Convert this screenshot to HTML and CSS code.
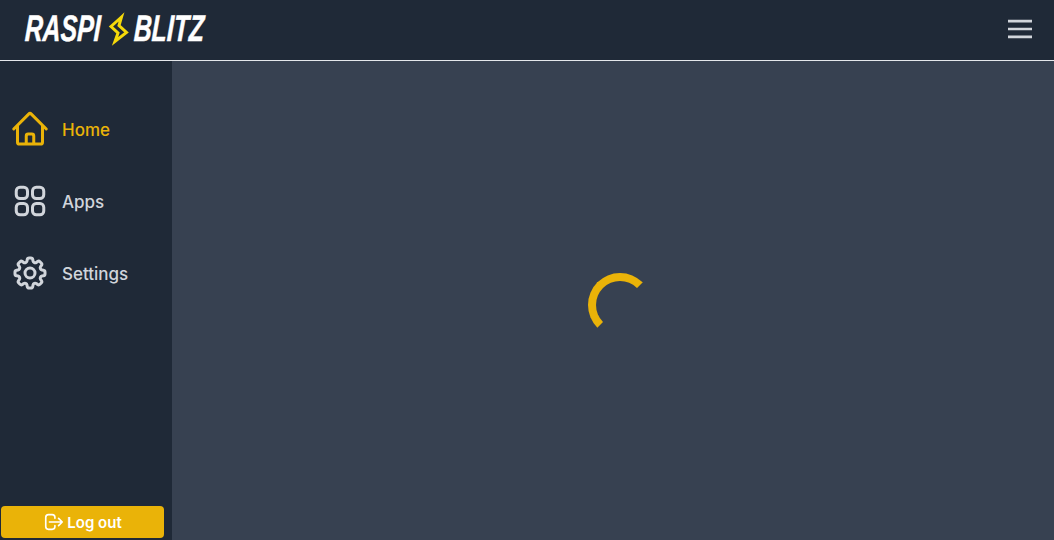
FILE: index.html
```html
<!DOCTYPE html>
<html lang="en">
<head>
<meta charset="utf-8">
<title>RaspiBlitz</title>
<link rel="stylesheet" href="styles.css">
</head>
<body>
<header class="topbar">
  <div class="logo">
    <span class="logo-word logo-raspi">RASPI</span>
    <svg class="logo-bolt" viewBox="0 0 24 34"><path d="M14.5 5 4 14.5l7 6.5-3 8.5 11.5-9-7.5-7z" fill="none" stroke="#f5d90a" stroke-width="3" stroke-miterlimit="6"/></svg>
    <span class="logo-word logo-blitz">BLITZ</span>
  </div>
  <svg class="burger" viewBox="0 0 24 24" fill="none" stroke="currentColor" stroke-width="1.7"><path d="M4 6.75h16M4 12h16M4 17.25h16"/></svg>
</header>
<div class="shell">
  <aside class="sidebar">
    <nav class="nav">
      <a class="nav-item active">
        <svg class="nav-icon" viewBox="0 0 24 24" fill="none" stroke="currentColor" stroke-width="1.8" stroke-linecap="round" stroke-linejoin="round"><path d="m2.25 12 8.954-8.955c.44-.439 1.152-.439 1.591 0L21.75 12M4.5 9.75v10.125c0 .621.504 1.125 1.125 1.125H9.75v-4.875c0-.621.504-1.125 1.125-1.125h2.25c.621 0 1.125.504 1.125 1.125V21h4.125c.621 0 1.125-.504 1.125-1.125V9.75M8.25 21h8.25"/></svg>
        <span class="nav-label">Home</span>
      </a>
      <a class="nav-item">
        <svg class="nav-icon" viewBox="0 0 24 24" fill="none" stroke="currentColor" stroke-width="1.8" stroke-linecap="round" stroke-linejoin="round"><path d="M3.75 6A2.25 2.25 0 0 1 6 3.75h2.25A2.25 2.25 0 0 1 10.5 6v2.25a2.25 2.25 0 0 1-2.25 2.25H6a2.25 2.25 0 0 1-2.25-2.25V6ZM3.75 15.75A2.25 2.25 0 0 1 6 13.5h2.25a2.25 2.25 0 0 1 2.25 2.25V18a2.25 2.25 0 0 1-2.25 2.25H6A2.25 2.25 0 0 1 3.75 18v-2.25ZM13.5 6a2.25 2.25 0 0 1 2.25-2.25H18A2.25 2.25 0 0 1 20.25 6v2.25A2.25 2.25 0 0 1 18 10.5h-2.25a2.25 2.25 0 0 1-2.25-2.25V6ZM13.5 15.75a2.25 2.25 0 0 1 2.25-2.25H18a2.25 2.25 0 0 1 2.25 2.25V18A2.25 2.25 0 0 1 18 20.25h-2.25A2.25 2.25 0 0 1 13.5 18v-2.25Z"/></svg>
        <span class="nav-label">Apps</span>
      </a>
      <a class="nav-item">
        <svg class="nav-icon" viewBox="0 0 24 24" fill="none" stroke="currentColor" stroke-width="1.8" stroke-linecap="round" stroke-linejoin="round"><path d="M10.343 3.94c.09-.542.56-.94 1.11-.94h1.093c.55 0 1.02.398 1.11.94l.149.894c.07.424.384.764.78.93.398.164.855.142 1.205-.108l.737-.527a1.125 1.125 0 0 1 1.45.12l.773.774c.39.389.44 1.002.12 1.45l-.527.737c-.25.35-.272.806-.107 1.204.165.397.505.71.93.78l.893.15c.543.09.94.559.94 1.109v1.094c0 .55-.397 1.02-.94 1.11l-.894.149c-.424.07-.764.383-.929.78-.165.398-.143.854.107 1.204l.527.738c.32.447.269 1.06-.12 1.45l-.774.773a1.125 1.125 0 0 1-1.449.12l-.738-.527c-.35-.25-.806-.272-1.203-.107-.398.165-.71.505-.781.929l-.149.894c-.09.542-.56.94-1.11.94h-1.094c-.55 0-1.019-.398-1.11-.94l-.148-.894c-.071-.424-.384-.764-.781-.93-.398-.164-.854-.142-1.204.108l-.738.527c-.447.32-1.06.269-1.45-.12l-.773-.774a1.125 1.125 0 0 1-.12-1.45l.527-.737c.25-.35.272-.806.108-1.204-.165-.397-.506-.71-.93-.78l-.894-.15c-.542-.09-.94-.56-.94-1.109v-1.094c0-.55.398-1.02.94-1.11l.894-.149c.424-.07.765-.383.93-.78.165-.398.143-.854-.108-1.204l-.526-.738a1.125 1.125 0 0 1 .12-1.45l.773-.773a1.125 1.125 0 0 1 1.45-.12l.737.527c.35.25.807.272 1.204.107.397-.165.71-.505.78-.929l.15-.894Z"/><path d="M15 12a3 3 0 1 1-6 0 3 3 0 0 1 6 0Z"/></svg>
        <span class="nav-label">Settings</span>
      </a>
    </nav>
    <button class="logout">
      <svg class="logout-icon" viewBox="0 0 24 24" fill="none" stroke="currentColor" stroke-width="1.8" stroke-linecap="round" stroke-linejoin="round"><path d="M17 16l4-4m0 0-4-4m4 4H7m6 4v1a3 3 0 0 1-3 3H6a3 3 0 0 1-3-3V7a3 3 0 0 1 3-3h4a3 3 0 0 1 3 3v1"/></svg>
      <span>Log out</span>
    </button>
  </aside>
  <main class="content">
    <div class="spinner"></div>
  </main>
</div>
</body>
</html>
```
FILE: styles.css
```css
* { box-sizing: border-box; }
html, body { margin: 0; height: 100%; }
body {
  display: flex;
  flex-direction: column;
  overflow: hidden;
  background: #374151;
  font-family: Inter, "Liberation Sans", sans-serif;
}
.topbar {
  height: 61px;
  flex: none;
  display: flex;
  align-items: center;
  justify-content: space-between;
  padding: 0 16px 2px 25px;
  background: #1f2937;
  border-bottom: 1px solid #e5e7eb;
}
.logo { display: flex; align-items: center; }
.logo-word {
  display: block;
  white-space: nowrap;
  font-family: "Liberation Sans", sans-serif;
  font-weight: 700;
  font-style: italic;
  font-size: 37px;
  line-height: 40px;
  color: #fff;
  -webkit-text-stroke: 0.5px #fff;
  transform-origin: left center;
  transform: scaleX(0.67) skewX(-4deg);
}
.logo-raspi { width: 82px; }
.logo-blitz { width: 71px; }
.logo-bolt { width: 24px; height: 34px; flex: none; margin-right: 3px; }
.burger { width: 36px; height: 36px; color: #d1d5db; }
.shell { flex: 1; display: flex; min-height: 0; }
.sidebar {
  width: 172px;
  flex: none;
  display: flex;
  flex-direction: column;
  justify-content: space-between;
  background: #1f2937;
  padding: 44px 8px 2px 1px;
}
.nav { display: flex; flex-direction: column; gap: 24px; }
.nav-item {
  display: flex;
  align-items: center;
  gap: 12px;
  height: 48px;
  padding-left: 9px;
  color: #d1d5db;
  font-size: 17px;
  font-weight: 500;
}
.nav-label { padding-top: 2px; }
.nav-item.active { color: #eab308; }
.nav-icon { width: 40px; height: 40px; flex: none; }
.logout {
  height: 32px;
  display: flex;
  align-items: center;
  justify-content: center;
  gap: 2px;
  border: 0;
  border-radius: 4px;
  background: #eab308;
  color: #fff;
  font-family: inherit;
  font-size: 15px;
  font-weight: 600;
}
.logout-icon { width: 22px; height: 22px; flex: none; }
.content {
  flex: 1;
  display: flex;
  align-items: center;
  justify-content: center;
  padding: 9px 0 0 14px;
}
.spinner {
  width: 64px;
  height: 64px;
  border: 8px solid transparent;
  border-top-color: #eab308;
  border-left-color: #eab308;
  border-radius: 50%;
}
```
